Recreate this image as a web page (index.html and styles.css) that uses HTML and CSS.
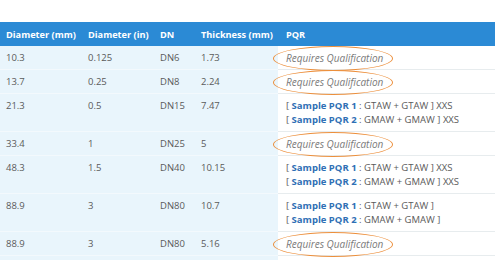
FILE: index.html
```html
<!DOCTYPE html>
<html>
<head>
<meta charset="utf-8">
<link rel="stylesheet" href="styles.css">
</head>
<body>
<table class="grid">
  <colgroup>
    <col class="c1"><col class="c2"><col class="c3"><col class="c4"><col class="c5">
  </colgroup>
  <thead>
    <tr><th>Diameter (mm)</th><th>Diameter (in)</th><th>DN</th><th>Thickness (mm)</th><th class="pqr">PQR</th></tr>
  </thead>
  <tbody>
    <tr><td>10.3</td><td>0.125</td><td>DN6</td><td>1.73</td><td class="pqr"><span class="rq">Requires Qualification</span></td></tr>
    <tr><td>13.7</td><td>0.25</td><td>DN8</td><td>2.24</td><td class="pqr"><span class="rq">Requires Qualification</span></td></tr>
    <tr><td>21.3</td><td>0.5</td><td>DN15</td><td>7.47</td><td class="pqr">[ <a class="lnk">Sample PQR 1</a> : GTAW + GTAW ] XXS<br>[ <a class="lnk">Sample PQR 2</a> : GMAW + GMAW ] XXS</td></tr>
    <tr><td>33.4</td><td>1</td><td>DN25</td><td>5</td><td class="pqr"><span class="rq">Requires Qualification</span></td></tr>
    <tr><td>48.3</td><td>1.5</td><td>DN40</td><td>10.15</td><td class="pqr">[ <a class="lnk">Sample PQR 1</a> : GTAW + GTAW ] XXS<br>[ <a class="lnk">Sample PQR 2</a> : GMAW + GMAW ] XXS</td></tr>
    <tr><td>88.9</td><td>3</td><td>DN80</td><td>10.7</td><td class="pqr">[ <a class="lnk">Sample PQR 1</a> : GTAW + GTAW ]<br>[ <a class="lnk">Sample PQR 2</a> : GMAW + GMAW ]</td></tr>
    <tr><td>88.9</td><td>3</td><td>DN80</td><td>5.16</td><td class="pqr"><span class="rq">Requires Qualification</span></td></tr>
    <tr class="empty"><td></td><td></td><td></td><td></td><td class="pqr"></td></tr>
  </tbody>
</table>
</body>
</html>
```
FILE: styles.css
```css
html, body {
  margin: 0;
  padding: 0;
  background: #ffffff;
  overflow: hidden;
  height: 260px;
}
body {
  font-family: "Open Sans", "Liberation Sans", sans-serif;
  font-size: 9.5px;
  color: #5a5a5a;
}
.grid {
  margin-top: 22px;
  width: 495px;
  border-collapse: collapse;
  table-layout: fixed;
}
.c1 { width: 82px; }
.c2 { width: 72px; }
.c3 { width: 41px; }
.c4 { width: 83px; }
.grid th {
  background: #2b8ad5;
  color: #ffffff;
  font-weight: 700;
  font-size: 9.2px;
  text-align: left;
  height: 24px;
  padding: 0 0 0 6px;
  white-space: nowrap;
  overflow: hidden;
}
.grid td {
  background: #e9f5fc;
  text-align: left;
  vertical-align: top;
  line-height: 14px;
  padding: 5px 0 4px 6px;
  border-top: 1px solid #f3f9fd;
  white-space: nowrap;
}
.grid th.pqr, .grid td.pqr {
  padding-left: 8px;
}
.grid td.pqr {
  background: #ffffff;
  border-top: 1px solid #e7ecee;
}
.grid tbody tr:first-child td { border-top: none; }
.empty td { height: 14px; }
.lnk {
  color: #2f6fb5;
  font-weight: 700;
}
.rq {
  position: relative;
  display: inline-block;
  vertical-align: top;
  line-height: 14px;
  font-style: italic;
  font-size: 10px;
  color: #7a7a7a;
}
.rq::after {
  content: "";
  position: absolute;
  left: -13px;
  top: -5px;
  width: 118px;
  height: 23px;
  border: 1.5px solid #ec8f3c;
  border-radius: 50%;
}
```
